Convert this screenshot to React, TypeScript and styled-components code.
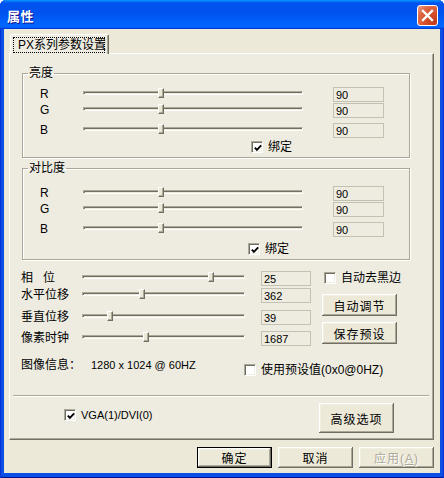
import React from 'react'
import styled, { createGlobalStyle } from 'styled-components'

/* data */
const rgb = [
  { label: 'R', value: 90, pos: 0.35 },
  { label: 'G', value: 90, pos: 0.35 },
  { label: 'B', value: 90, pos: 0.35 },
]

const adjust = [
  { label: '相位', spread: true, value: 25, pos: 0.8 },
  { label: '水平位移', value: 362, pos: 0.363 },
  { label: '垂直位移', value: 39, pos: 0.16 },
  { label: '像素时钟', value: 1687, pos: 0.389 },
]

export default function App() {
  return (
    <>
      <GlobalStyle />
      <Window>
        <TitleBar>
          <Title>属性</Title>
          <CloseButton aria-label="close">
            <svg width="13" height="13" viewBox="0 0 13 13">
              <path d="M2 2 L11 11 M11 2 L2 11" stroke="#fff" strokeWidth="2.4" strokeLinecap="square" />
            </svg>
          </CloseButton>
        </TitleBar>

        <Frame>
          <TabStrip>
            <Tab>
              <FocusLabel>PX系列参数设置</FocusLabel>
            </Tab>
          </TabStrip>

          <Panel>
            <ColorGroup title="亮度" $padTop={7} $checkGap={3} $checkLeft={228} />
            <ColorGroup title="对比度" $padTop={11} $checkGap={6} $checkLeft={225} $marginTop={3} />

            <LowerSection>
              <AdjustGrid>
                {adjust.map((a) => (
                  <React.Fragment key={a.label}>
                    <RowLabel $spread={a.spread}>{a.label}</RowLabel>
                    <Slider pos={a.pos} width={163} />
                    <ValueBox readOnly value={a.value} $width={50} />
                  </React.Fragment>
                ))}
              </AdjustGrid>
              <SideColumn>
                <CheckBox>自动去黑边</CheckBox>
                <Button $width={75} $height={22} style={{ marginTop: 10 }}>自动调节</Button>
                <Button $width={75} $height={22} style={{ marginTop: 6 }}>保存预设</Button>
              </SideColumn>
            </LowerSection>

            <InfoRow>
              <span>图像信息：</span>
              <InfoValue>1280 x 1024 @ 60HZ</InfoValue>
              <PresetCheck>使用预设值(0x0@0HZ)</PresetCheck>
            </InfoRow>

            <Separator />

            <PanelFooter>
              <SourceCheck checked latin>VGA(1)/DVI(0)</SourceCheck>
              <Button $width={75} $height={30}>高级选项</Button>
            </PanelFooter>
          </Panel>

          <DialogButtons>
            <Button $width={75} $height={21} $default>确定</Button>
            <Button $width={75} $height={21}>取消</Button>
            <Button $width={75} $height={21} disabled>应用(<u>A</u>)</Button>
          </DialogButtons>
        </Frame>
      </Window>
    </>
  )
}

/* 亮度 / 对比度 group */
function ColorGroup({
  title,
  $padTop,
  $checkGap,
  $checkLeft,
  $marginTop = 12,
}: {
  title: string
  $padTop: number
  $checkGap: number
  $checkLeft: number
  $marginTop?: number
}) {
  return (
    <Group $marginTop={$marginTop}>
      <Legend>{title}</Legend>
      <RgbGrid $padTop={$padTop}>
        {rgb.map((c) => (
          <React.Fragment key={c.label}>
            <ChannelLabel>{c.label}</ChannelLabel>
            <Slider pos={c.pos} width={220} />
            <ValueBox readOnly value={c.value} $width={51} />
          </React.Fragment>
        ))}
      </RgbGrid>
      <CheckRow $gap={$checkGap} $left={$checkLeft}>
        <CheckBox checked>绑定</CheckBox>
      </CheckRow>
    </Group>
  )
}

function Slider({ pos, width }: { pos: number; width: number }) {
  return (
    <SliderBox $width={width}>
      <Groove />
      <Thumb style={{ left: `calc(${pos} * (100% - 6px))` }} />
    </SliderBox>
  )
}

function CheckBox({
  checked,
  latin,
  children,
  className,
}: {
  checked?: boolean
  latin?: boolean
  children?: React.ReactNode
  className?: string
}) {
  return (
    <CheckLabel className={className} $latin={latin}>
      <Box>
        {checked && (
          <svg width="8" height="8" viewBox="0 0 8 8">
            <path d="M0.8 3.6 L2.9 5.8 L7.2 1.4" stroke="#000" strokeWidth="1.9" fill="none" />
          </svg>
        )}
      </Box>
      <span>{children}</span>
    </CheckLabel>
  )
}

/* Styles */

const GlobalStyle = createGlobalStyle`
  html, body {
    margin: 0;
    padding: 0;
    background: #ffffff;
  }
  body {
    font-family: "Liberation Sans", "Noto Sans CJK SC", sans-serif;
    font-size: 12px;
    color: #000;
  }
  * {
    box-sizing: border-box;
  }
`

const Window = styled.div`
  width: 444px;
  height: 478px;
  display: flex;
  flex-direction: column;
  background: #0a4ee4;
  border-radius: 6px 6px 0 0;
  overflow: hidden;
  box-shadow: inset 1px 0 #0831d9, inset -1px 0 #0831d9, inset 0 -1px #00138c;
`

const TitleBar = styled.div`
  flex: none;
  height: 29px;
  display: flex;
  align-items: center;
  justify-content: space-between;
  padding: 1px 6px 0 7px;
  background: linear-gradient(
    180deg,
    #0997ff,
    #0053ee 10%,
    #0050ee 40%,
    #0066ff 86%,
    #0066ff 92%,
    #005bff 95%,
    #003dd7 97%,
    #003dd7
  );
`

const Title = styled.span`
  font-family: "Noto Sans CJK SC", sans-serif;
  font-size: 13px;
  font-weight: bold;
  color: #fff;
  text-shadow: 1px 1px #0f1089;
  letter-spacing: 0.5px;
`

const CloseButton = styled.button`
  width: 21px;
  height: 21px;
  padding: 0;
  display: flex;
  align-items: center;
  justify-content: center;
  border: 1px solid #fff;
  border-radius: 3px;
  background: radial-gradient(circle at 85% 85%, #c13b1a 0, #d8522e 45%, #e06845 70%, #f0a48c 100%);
`

const Frame = styled.div`
  flex: 1;
  margin: 0 4px 5px;
  padding: 5px 6px 0 5px;
  display: flex;
  flex-direction: column;
  background: #ece9d8;
`

const TabStrip = styled.div`
  height: 19px;
  display: flex;
  padding-left: 1px;
  position: relative;
  z-index: 1;
`

const Tab = styled.div`
  width: 99px;
  height: 20px;
  padding: 2px 3px 0 2px;
  background: #eeece1;
  border-top: 1px solid #fff;
  border-left: 1px solid #fff;
  border-right: 1px solid #716f64;
  border-radius: 2px 2px 0 0;
  box-shadow: inset -1px 0 #aca899;
`

const FocusLabel = styled.span`
  display: block;
  height: 16px;
  line-height: 14px;
  padding-left: 4px;
  border: 1px dotted #000;
  white-space: nowrap;
`

const Panel = styled.div`
  width: 425px;
  height: 387px;
  display: flex;
  flex-direction: column;
  background: #eeece1;
  border: 1px solid;
  border-color: #fff #716f64 #716f64 #fff;
  box-shadow: inset -1px -1px #aca899;
`

const Group = styled.fieldset<{ $marginTop: number }>`
  width: 388px;
  margin: ${(p) => p.$marginTop}px 0 0 12px;
  padding: 0 0 4px 17px;
  border: 1px solid #aca899;
  box-shadow: 1px 1px 0 #fff, inset 1px 1px 0 #fff;
  min-inline-size: 0;
`

const Legend = styled.legend`
  margin-left: -12px;
  padding: 0 1px;
  line-height: 14px;
  font-size: 12px;
`

const RgbGrid = styled.div<{ $padTop: number }>`
  display: grid;
  grid-template-columns: 43px 250px 51px;
  grid-template-rows: 16px 20px 15px;
  align-items: start;
  padding-top: ${(p) => p.$padTop}px;
`

const ChannelLabel = styled.span`
  line-height: 15px;
  font-size: 12px;
`

const CheckRow = styled.div<{ $gap: number; $left: number }>`
  display: flex;
  margin-top: ${(p) => p.$gap}px;
  padding-left: ${(p) => p.$left - 17}px;
`

const SliderBox = styled.div<{ $width: number }>`
  position: relative;
  width: ${(p) => p.$width}px;
  height: 12px;
  padding-top: 4px;
`

const Groove = styled.div`
  height: 4px;
  border: 1px solid;
  border-color: #aca899 #fff #fff #aca899;
  box-shadow: inset 1px 1px #716f64;
  background: #ece9d8;
`

const Thumb = styled.div`
  position: absolute;
  top: 1px;
  width: 6px;
  height: 10px;
  background: #ece9d8;
  border: 1px solid;
  border-color: #fff #716f64 #716f64 #fff;
  box-shadow: inset -1px -1px #aca899;
`

const ValueBox = styled.input<{ $width: number }>`
  width: ${(p) => p.$width}px;
  height: 15px;
  margin: 0;
  padding: 0 2px;
  border: 1px solid #c3c1b2;
  background: transparent;
  font-family: "Liberation Sans", sans-serif;
  font-size: 11px;
  line-height: 13px;
  color: #000;
  outline: none;
`

const LowerSection = styled.div`
  display: flex;
  align-items: flex-start;
  margin-top: 11px;
  padding-left: 11px;
`

const AdjustGrid = styled.div`
  display: grid;
  grid-template-columns: 61px 179px 50px;
  grid-template-rows: 17px 22px 21px 15px;
  align-items: start;
`

const RowLabel = styled.span<{ $spread?: boolean }>`
  line-height: 15px;
  letter-spacing: ${(p) => (p.$spread ? '10px' : '0')};
  white-space: nowrap;
`

const SideColumn = styled.div`
  width: 75px;
  margin-left: 11px;
  padding-top: 1px;
  display: flex;
  flex-direction: column;
  padding-left: 2px;
  & > button {
    margin-left: -2px;
  }
`

const CheckLabel = styled.label<{ $latin?: boolean }>`
  display: inline-flex;
  align-items: center;
  gap: 5px;
  height: 12px;
  line-height: 14px;
  white-space: nowrap;
  font-size: ${(p) => (p.$latin ? '11px' : '12px')};
`

const Box = styled.span`
  flex: none;
  width: 12px;
  height: 12px;
  display: flex;
  align-items: center;
  justify-content: center;
  background: #fff;
  border: 1px solid;
  border-color: #aca899 #fff #fff #aca899;
  box-shadow: inset 1px 1px #716f64, inset -1px -1px #f1efe2;
  padding-left: 1px;
  padding-top: 1px;
`

const InfoRow = styled.div`
  display: grid;
  grid-template-columns: 70px 153px auto;
  align-items: start;
  margin-top: 12px;
  padding-left: 11px;
  line-height: 15px;
`

const InfoValue = styled.span`
  font-size: 11px;
`

const PresetCheck = styled(CheckBox)`
  margin-top: 6px;
`

const Separator = styled.div`
  height: 2px;
  margin: 19px 4px 0 3px;
  border-top: 1px solid #aca899;
  border-bottom: 1px solid #fff;
`

const PanelFooter = styled.div`
  height: 30px;
  margin-top: 6px;
  padding: 0 39px 0 54px;
  display: flex;
  align-items: flex-start;
  justify-content: space-between;
`

const SourceCheck = styled(CheckBox)`
  margin-top: 6px;
`

const Button = styled.button<{ $width: number; $height: number; $default?: boolean }>`
  width: ${(p) => p.$width}px;
  height: ${(p) => p.$height}px;
  padding: 0;
  font-family: "Liberation Sans", "Noto Sans CJK SC", sans-serif;
  font-size: 12px;
  color: #000;
  background: #ece9d8;
  border: ${(p) => (p.$default ? '1px solid #000' : 'none')};
  box-shadow: inset -1px -1px #716f64, inset 1px 1px #fff, inset -2px -2px #aca899, inset 2px 2px #f1efe2;
  letter-spacing: 1px;

  &:disabled {
    color: #aca899;
    text-shadow: 1px 1px #fff;
  }
`

const DialogButtons = styled.div`
  display: flex;
  justify-content: flex-end;
  gap: 6px;
  margin-top: 7px;
`
